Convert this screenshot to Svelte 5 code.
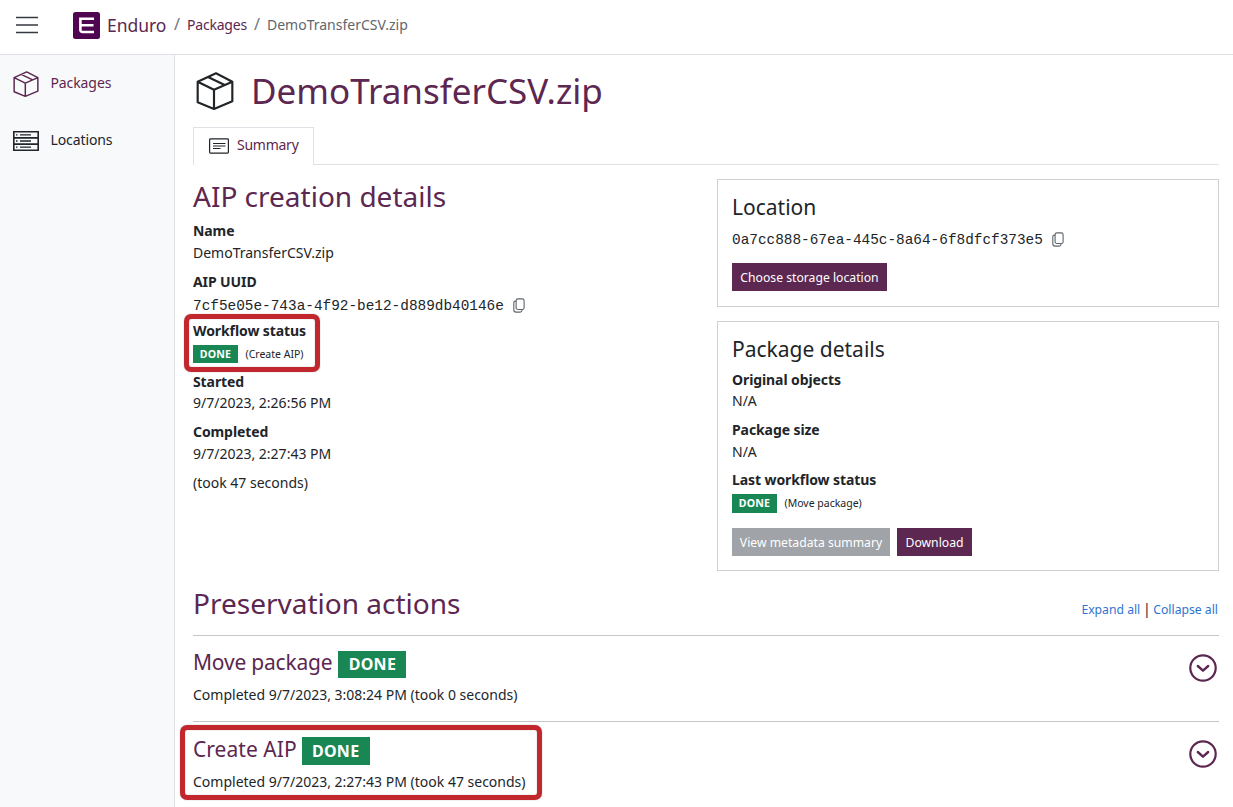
<script>
  const actions = [
    { name: 'Move package', status: 'DONE', note: 'Completed 9/7/2023, 3:08:24 PM (took 0 seconds)', marked: false },
    { name: 'Create AIP', status: 'DONE', note: 'Completed 9/7/2023, 2:27:43 PM (took 47 seconds)', marked: true }
  ];
</script>

{#snippet box()}
  <svg class="box" viewBox="0 0 112 114" fill="none" stroke="currentColor" stroke-width="6.500" stroke-linejoin="round">
    <path d="M59 4 108 29V88L53 111 4 91V29ZM4 29 53 53 108 29M53 53V111M35 15 85 39" />
  </svg>
{/snippet}

{#snippet copy()}
  <svg class="copy" viewBox="0 0 12 15" fill="none" stroke="currentColor" stroke-width="1.1">
    <rect x="3.1" y=".9" width="8" height="10.6" rx="1.8" />
    <path d="M3.1 3.1h-.7A1.6 1.6 0 0 0 .8 4.700V11.800a2.300 2.300 0 0 0 2.300 2.300H7.200A1.800 1.800 0 0 0 9 12.300V11.500" />
  </svg>
{/snippet}

<header>
  <svg class="burger" viewBox="0 0 22 18" stroke="#343a40" stroke-width="1.5">
    <path d="M0 1.500H22M0 9H22M0 16.500H22" />
  </svg>
  <svg class="logo" viewBox="0 0 27 27">
    <rect width="27" height="27" rx="2.500" fill="#4f0650" />
    <path d="M21 6.700H7.400V18A2 2 0 0 0 9.400 20H21M8 13.300H20.500" fill="none" stroke="#fff" stroke-width="2.600" />
  </svg>
  <span class="brand">Enduro</span>
  <span class="slash">/</span>
  <span class="crumb">Packages</span>
  <span class="slash">/</span>
  <span class="here">DemoTransferCSV.zip</span>
</header>

<div class="shell">
  <nav>
    <div class="item active">{@render box()}<span>Packages</span></div>
    <div class="item">
      <svg class="servers" viewBox="0 0 26 20" fill="none" stroke="currentColor" stroke-width="1.600">
        <path d="M.8.8H25.200V19.200H.8ZM.8 6.900H25.200M.8 13.100H25.200" />
        <path d="M7 3.800H18M7 10H18M7 16.200H18M3 3.800H4.500M3 10H4.500M3 16.200H4.500" stroke-width="1.300" />
      </svg>
      <span>Locations</span>
    </div>
  </nav>

  <main>
    <h1>{@render box()}<span>DemoTransferCSV.zip</span></h1>

    <div class="tabs">
      <div class="tab">
        <svg class="card-icon" viewBox="0 0 20 16" fill="none" stroke="#212529">
          <rect x=".6" y=".9" width="18.800" height="14.200" rx=".8" stroke-width="1.200" />
          <path d="M4 5.500H16.500M4 8H16.500M4 10.500H11.500" stroke-width="1.100" />
        </svg>
        <span>Summary</span>
      </div>
    </div>

    <div class="columns">
      <section class="creation">
        <h2>AIP creation details</h2>
        <dl>
          <dt>Name</dt>
          <dd>DemoTransferCSV.zip</dd>
          <dt>AIP UUID</dt>
          <dd class="uuid tight"><code>7cf5e05e-743a-4f92-be12-d889db40146e</code>{@render copy()}</dd>
          <div class="status">
            <dt>Workflow status</dt>
            <dd class="state"><b class="badge">DONE</b><small>(Create AIP)</small></dd>
            <i class="mark"></i>
          </div>
          <dt class="started">Started</dt>
          <dd>9/7/2023, 2:26:56 PM</dd>
          <dt>Completed</dt>
          <dd>9/7/2023, 2:27:43 PM</dd>
          <dd>(took 47 seconds)</dd>
        </dl>
      </section>

      <div class="cards">
        <section class="card">
          <h4>Location</h4>
          <div class="uuid location"><code>0a7cc888-67ea-445c-8a64-6f8dfcf373e5</code>{@render copy()}</div>
          <button class="choose">Choose storage location</button>
        </section>
        <section class="card">
          <h4>Package details</h4>
          <dl>
            <dt>Original objects</dt>
            <dd>N/A</dd>
            <dt class="size">Package size</dt>
            <dd>N/A</dd>
            <dt>Last workflow status</dt>
            <dd class="state"><b class="badge">DONE</b><small>(Move package)</small></dd>
          </dl>
          <div class="buttons">
            <button class="view" disabled>View metadata summary</button>
            <button class="download">Download</button>
          </div>
        </section>
      </div>
    </div>

    <div class="heading">
      <h2>Preservation actions</h2>
      <div class="links"><a href="#expand">Expand all</a><span>|</span><a href="#collapse">Collapse all</a></div>
    </div>

    {#each actions as action}
      <article class:marked={action.marked}>
        <div class="text">
          <h3><span>{action.name}</span><b class="badge large">{action.status}</b></h3>
          <p>{action.note}</p>
        </div>
        <svg class="toggle" viewBox="0 0 28 28" fill="none" stroke="#5c2750" stroke-width="2.200">
          <circle cx="14" cy="14" r="12.700" />
          <path d="M8.800 12 14 16.700 19.200 12" stroke-width="2.400" stroke-linecap="round" stroke-linejoin="round" />
        </svg>
        {#if action.marked}<i class="mark"></i>{/if}
      </article>
    {/each}
  </main>
</div>

<style>
  :global(body) {
    margin: 0;
    overflow: hidden;
    background: #fff;
    color: #212529;
    font: 14px/21px "Noto Sans", sans-serif;
  }
  :global(*) { box-sizing: border-box; }
  h1, h2, h3, h4, p, dl, dd { margin: 0; }
  h1, h2, h3, h4 { font-weight: 400; }
  svg { display: block; flex: none; }

  header {
    display: flex;
    align-items: center;
    height: 55px;
    padding: 0 0 4px 16px;
    border-bottom: 1px solid #dee2e6;
    white-space: nowrap;
  }
  header span { padding-bottom: 2px; }
  .burger { width: 22px; height: 18px; }
  .logo { width: 27px; height: 27px; margin: 1px 0 0 35px; }
  header .brand { width: 60px; margin-left: 7px; padding-bottom: 0; font-size: 17.500px; color: #5c2750; letter-spacing: -.05px; }
  .slash { width: 6px; margin: 0 7px; color: #6c757d; font-size: 16px; }
  .crumb { width: 60px; color: #5c2750; letter-spacing: -.2px; }
  .here { color: #5f666d; }

  .shell { display: flex; height: 752px; }
  nav { width: 175px; flex: none; border-right: 1px solid #dee2e6; background: #f8f9fb; }
  .item { display: flex; align-items: center; gap: 12px; height: 57px; padding: 0 0 2px 12.500px; }
  .item span { letter-spacing: -.1px; }
  .active { color: #5c2750; }
  .item .box { width: 26px; height: 26px; margin-top: 2px; }
  .servers { width: 26px; height: 20px; margin-top: 2px; }

  main { flex: 1; padding: 15px 14px 0 18px; }
  h1 { display: flex; align-items: center; height: 42px; font-size: 35px; line-height: 42px; color: #5c2750; }
  h1 .box { width: 38px; height: 38px; margin: -1px 17px 0 3px; color: #212529; }

  .tabs { display: flex; height: 53px; margin-bottom: 14px; align-items: flex-end; border-bottom: 1px solid #dee2e6; }
  .tab {
    display: flex;
    align-items: center;
    gap: 8px;
    width: 121px;
    height: 38px;
    margin-bottom: -1px;
    padding: 0 0 4px 15px;
    border: 1px solid #dee2e6;
    border-bottom: 0;
    background: #fff;
    color: #5c2750;
  }
  .card-icon { width: 20px; height: 16px; margin-top: 3px; }
  .tab span { padding-bottom: 1px; letter-spacing: -.25px; }

  .columns { display: grid; grid-template-columns: 1fr 502px; height: 392px; }
  h2 { font-size: 28px; line-height: 34px; color: #5c2750; }
  dt { height: 21px; margin-bottom: 1px; font-weight: 700; letter-spacing: -.09px; }
  dd { height: 21px; margin-bottom: 8px; }
  .creation dl { padding-top: 7px; }
  .creation .started { margin-bottom: 0; }
  .uuid { display: flex; align-items: center; }
  code { font: 14.400px/26px "Liberation Mono", monospace; }
  .copy { width: 12px; height: 15px; margin: -1px 0 0 9.500px; color: #5f656b; }
  .tight { height: 26px; margin-bottom: 1px; }
  .status { position: relative; height: 51px; }
  .state { display: flex; align-items: flex-start; padding-top: 3px; gap: 7.500px; }
  .state small { font-size: 10.500px; line-height: 18px; }
  .badge {
    display: flex;
    align-items: center;
    justify-content: center;
    width: 45px;
    height: 18px;
    background: #198754;
    color: #fff;
    font-size: 10.600px;
    font-weight: 700;
    letter-spacing: .2px;
  }
  .mark {
    position: absolute;
    left: -9px;
    top: -6px;
    width: 136px;
    height: 58px;
    border: 5px solid #c1272d;
    border-radius: 7px;
    box-shadow: 0 0 1px #777, inset 0 0 1px #777;
    pointer-events: none;
  }

  .cards { display: flex; flex-direction: column; gap: 14px; }
  .card { height: 128px; padding: 14px; border: 1px solid #ced1d4; }
  .card + .card { height: 250px; }
  h4 { font-size: 21px; line-height: 26px; }
  .location { height: 26px; margin: 7px 0 10px; }
  .card dl { height: 166px; padding-top: 7px; }
  .card dt { margin-bottom: 0; }
  .card .size { margin-bottom: 1px; }
  .card dd:nth-of-type(2) { margin-bottom: 7px; }
  .card .state { padding-top: 4px; }
  .card .state .badge { height: 19px; }
  button {
    height: 28px;
    padding: 1px 0 0;
    border: 0;
    border-radius: 0;
    background: #5c2750;
    color: #fff;
    font: 12.200px/27px "Noto Sans", sans-serif;
    white-space: nowrap;
  }
  .buttons { display: flex; gap: 7px; }
  .choose { display: block; width: 155px; }
  .view { width: 158px; background: #a0a3a8; }
  .download { width: 75px; }

  .heading { display: flex; justify-content: space-between; height: 64px; padding-top: 15px; }
  .links { display: flex; padding: 13px 1px 0 0; font-size: 12.200px; }
  .links span { width: 13px; text-align: center; font-size: 14px; line-height: 20px; }
  a { color: #2f74d0; text-decoration: none; }

  article {
    position: relative;
    display: flex;
    justify-content: space-between;
    height: 86px;
    padding-top: 15px;
    border-top: 1px solid #c4c6c9;
  }
  h3 { display: flex; align-items: flex-start; gap: 6px; font-size: 21px; line-height: 22px; height: 33px; color: #5c2750; }
  h3 span { letter-spacing: -.2px; }
  .large { width: 68px; height: 27px; padding-bottom: 1px; font-size: 16px; letter-spacing: .3px; }
  .marked .text { padding-top: 1px; }
  .marked h3 { gap: 5px; }
  .marked h3 span { letter-spacing: .04px; }
  .marked .large { margin-top: -1px; height: 28px; padding-bottom: 0; }
  .toggle { width: 28px; height: 28px; margin: 3px 2px 0 0; }
  article .mark { left: -13px; top: 3px; width: 362px; height: 75px; }
</style>
